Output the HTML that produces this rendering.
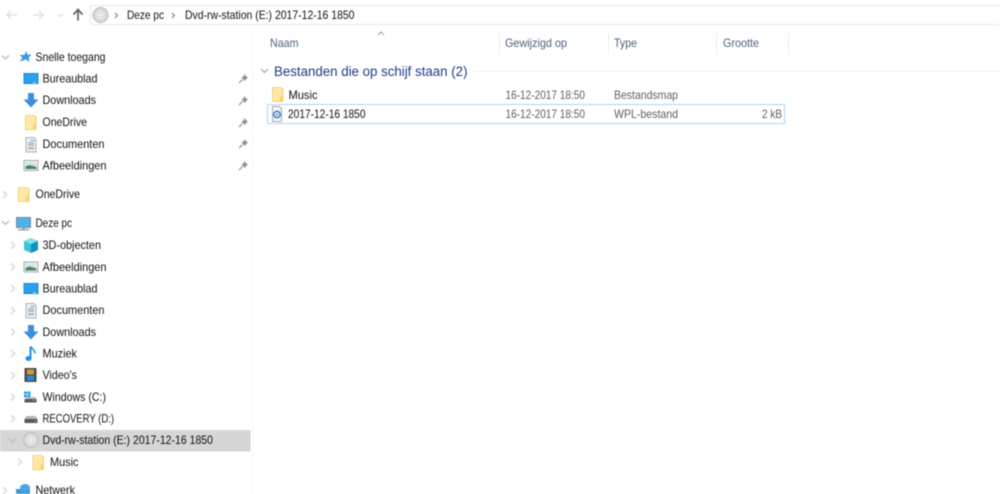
<!DOCTYPE html>
<html><head><meta charset="utf-8"><style>
html,body{margin:0;padding:0;background:#fff;width:1000px;height:494px;overflow:hidden}
svg{display:block;filter:blur(.4px)}
text{font-family:"Liberation Sans",sans-serif;font-size:12px;fill:#101010}
.g{fill:#5f5f5f}.h{fill:#4c607a}
</style></head><body>
<svg width="1000" height="494" viewBox="0 0 1000 494" xmlns="http://www.w3.org/2000/svg">
<defs>
<g id="folder"><path d="M0 0h9.500l.5 1h1.500v14H0z" fill="#f4d478"/><rect x="1" y="1" width="9" height="13" fill="#ffe9a6"/><rect x="8" y="9.500" width="3.500" height="5.500" fill="#f7d26a"/></g>
<g id="desk"><rect x="0" y="0" width="15" height="11" fill="#1b86d8"/><rect x="1" y="1" width="13" height="8.500" fill="#2aa0ee"/><rect x="9" y="9.500" width="4" height=".8" fill="#bfe0f5"/></g>
<path id="down" d="M4.500 0h6v6.500h4.500L7.500 14.500 0 6.500h4.500z" fill="#3a8fde"/>
<g id="doc"><path d="M.5.500h8l2 2v12.500H.5z" fill="#f0f0f0" stroke="#b0b0b0"/><path d="M5 3.500h4M2.500 6h6M2.500 8h6" stroke="#6c9ac4"/><path d="M2.500 10h6v2.500h-6z" fill="#aeb9c4"/></g>
<g id="pic"><rect x=".5" y=".5" width="14" height="10" fill="#f2f2f2" stroke="#a8a8a8"/><rect x="2" y="2" width="11" height="7" fill="#cfe5f5"/><path d="M2 6.500l4-1.500 7 2v2H2z" fill="#4c8060"/></g>
<g id="pin" transform="translate(-1 -1)"><path d="M6.500 1l4 4-1.500.5-1.500 2.500-3.500-3.500 2.500-1.500z" fill="#8f8f8f"/><path d="M5 6.500L1.500 10" stroke="#8f8f8f" stroke-width="1.200"/></g>
<g id="disc"><circle cx="8" cy="8" r="7.500" fill="#d8d8d8" stroke="#bcbcbc"/><circle cx="8" cy="8" r="4.500" fill="#e8e8e8"/><circle cx="8" cy="8" r="1.800" fill="#fff" stroke="#c0c0c0" stroke-width=".6"/></g>
<g id="drive"><path d="M2 0h9l2 3v4H0V3z" fill="#b5b5b5"/><rect x="0" y="3" width="13" height="4" fill="#5a5a5a"/><rect x="10" y="4.500" width="1.500" height="1" fill="#6fd06f"/></g>
<path id="cr" d="M0 0l3.500 3.500L0 7" fill="none" stroke="#d4d4d4" stroke-width="1.300"/>
<path id="cd" d="M0 0l3.500 3.500L7 0" fill="none" stroke="#bcbcbc" stroke-width="1.300"/>
</defs>

<!-- toolbar -->
<g fill="none" stroke-width="1.300">
<path d="M7 15h10M11 11l-4 4 4 4" stroke="#dedede"/>
<path d="M33 15h10M39 11l4 4-4 4" stroke="#dedede"/>
<path d="M58 14l2.500 2.500L63 14" stroke="#dedede"/>
<path d="M78 20.500V10M73.500 14.500l4.500-5 4.500 5" stroke="#666" stroke-width="1.800"/>
</g>
<path d="M90.500 25V5.500H1000" fill="none" stroke="#eaeaea"/>
<path d="M90.500 24.500H1000" fill="none" stroke="#eaeaea"/>
<use href="#disc" x="92.500" y="7"/>
<path d="M115 13l2.500 2.500L115 18" fill="none" stroke="#777"/>
<path d="M172 13l2.500 2.500L172 18" fill="none" stroke="#777"/>
<text x="127" y="19" textLength="37" lengthAdjust="spacingAndGlyphs">Deze pc</text>
<text x="185" y="19" textLength="169.500" lengthAdjust="spacingAndGlyphs">Dvd-rw-station (E:) 2017-12-16 1850</text>

<!-- sidebar separators -->
<rect x="252" y="30" width="1" height="464" fill="#f6f6f6"/>
<rect x="0" y="430" width="250.500" height="21.500" fill="#d6d6d6"/>

<!-- quick access -->
<use href="#cd" x="2" y="55.500"/>
<path d="M26 51l1.700 3.800 4-.3-3 3 1 4.500-3.800-2.500-6 2 2.500-4-2.800-2.500 5-.3z" fill="#3b9ae0"/>
<text x="35.500" y="61" textLength="70" lengthAdjust="spacingAndGlyphs">Snelle toegang</text>
<use href="#desk" x="23.500" y="73"/><text x="42.500" y="82.500" textLength="55" lengthAdjust="spacingAndGlyphs">Bureaublad</text>
<use href="#down" x="23.500" y="93"/><text x="42.500" y="104" textLength="53.500" lengthAdjust="spacingAndGlyphs">Downloads</text>
<use href="#folder" x="25" y="115"/><text x="42.500" y="126" textLength="44.500" lengthAdjust="spacingAndGlyphs">OneDrive</text>
<use href="#doc" x="25.500" y="137"/><text x="42.500" y="148" textLength="62" lengthAdjust="spacingAndGlyphs">Documenten</text>
<use href="#pic" x="23.500" y="160"/><text x="42.500" y="169.500" textLength="64" lengthAdjust="spacingAndGlyphs">Afbeeldingen</text>
<use href="#pin" x="238.500" y="74"/><use href="#pin" x="238.500" y="96"/><use href="#pin" x="238.500" y="118"/><use href="#pin" x="238.500" y="139"/><use href="#pin" x="238.500" y="161"/>

<!-- onedrive -->
<use href="#cr" x="3" y="191"/>
<use href="#folder" x="18" y="187"/>
<text x="35.500" y="198" textLength="44.500" lengthAdjust="spacingAndGlyphs">OneDrive</text>

<!-- deze pc -->
<use href="#cd" x="2" y="221"/>
<rect x="16.500" y="217.500" width="14" height="10" fill="#4eb1ec" stroke="#7a8a99"/><rect x="18" y="229" width="11" height="1.500" fill="#9aa5ad"/><rect x="22" y="227.500" width="3" height="2" fill="#9aa5ad"/>
<text x="35.500" y="227" textLength="36.500" lengthAdjust="spacingAndGlyphs">Deze pc</text>

<use href="#cr" x="11" y="242"/>
<path d="M31 238l7 3v9l-7 3-7-3v-9z" fill="#3cc3d9"/><path d="M31 244l7-3v9l-7 3z" fill="#0f90c0"/><path d="M24 241l7-3 7 3-7 3z" fill="#7fe0ea"/>
<text x="42.500" y="249" textLength="58.500" lengthAdjust="spacingAndGlyphs">3D-objecten</text>
<use href="#cr" x="11" y="263.500"/><use href="#pic" x="23.500" y="261.500"/><text x="42.500" y="271" textLength="64" lengthAdjust="spacingAndGlyphs">Afbeeldingen</text>
<use href="#cr" x="11" y="285"/><use href="#desk" x="23.500" y="283"/><text x="42.500" y="292.500" textLength="55" lengthAdjust="spacingAndGlyphs">Bureaublad</text>
<use href="#cr" x="11" y="307"/><use href="#doc" x="25.500" y="303"/><text x="42.500" y="314" textLength="62" lengthAdjust="spacingAndGlyphs">Documenten</text>
<use href="#cr" x="11" y="328.500"/><use href="#down" x="23.500" y="325"/><text x="42.500" y="336" textLength="53.500" lengthAdjust="spacingAndGlyphs">Downloads</text>
<use href="#cr" x="11" y="350"/>
<path d="M30.500 346.500v12" stroke="#1e90e8" stroke-width="2"/><ellipse cx="28.500" cy="358.500" rx="3" ry="2.500" fill="#1e90e8"/><path d="M31 346.500c1 3 4 3 4 7" stroke="#1e90e8" stroke-width="1.500" fill="none"/>
<text x="42.500" y="357.500" textLength="34.500" lengthAdjust="spacingAndGlyphs">Muziek</text>
<use href="#cr" x="11" y="372"/>
<rect x="24.500" y="368" width="12" height="14" fill="#4a4a4a"/><rect x="27" y="369.500" width="7" height="5" fill="#c9a03a"/><rect x="27" y="375.500" width="7" height="5" fill="#2b8ad8"/>
<text x="42.500" y="379" textLength="34.500" lengthAdjust="spacingAndGlyphs">Video's</text>
<use href="#cr" x="11" y="393.500"/>
<path d="M24 394h3v-2.500h-3zM27.500 394h3v-2.500h-3zM24 397.500h3v-3h-3zM27.500 397.500h3v-3h-3z" fill="#1fa5ee"/><rect x="24.500" y="399" width="12" height="3.500" fill="#5a5a5a"/><rect x="26" y="397" width="10" height="2" fill="#bdbdbd"/><rect x="33" y="400" width="1.500" height="1" fill="#6fd06f"/>
<text x="42.500" y="401" textLength="63.500" lengthAdjust="spacingAndGlyphs">Windows (C:)</text>
<use href="#cr" x="11" y="415"/><use href="#drive" x="24.500" y="416"/><text x="42.500" y="422.500" textLength="71.500" lengthAdjust="spacingAndGlyphs">RECOVERY (D:)</text>
<use href="#cd" x="9" y="438.500"/><use href="#disc" x="23" y="432"/><text x="42.500" y="444" textLength="170.500" lengthAdjust="spacingAndGlyphs">Dvd-rw-station (E:) 2017-12-16 1850</text>
<use href="#cr" x="18" y="458.500"/><use href="#folder" x="32.500" y="455"/><text x="50" y="466" textLength="28.500" lengthAdjust="spacingAndGlyphs">Music</text>
<use href="#cr" x="3" y="487"/>
<rect x="16" y="489" width="14" height="5" fill="#3c9ad8"/><ellipse cx="25" cy="488" rx="5" ry="4" fill="#4aa5e0"/>
<text x="35.500" y="494" textLength="39.500" lengthAdjust="spacingAndGlyphs">Netwerk</text>

<!-- header -->
<path d="M378 35l3-3 3 3" fill="none" stroke="#a8a8a8" stroke-width="1.200"/>
<text class="h" x="270" y="47" textLength="28.500" lengthAdjust="spacingAndGlyphs">Naam</text>
<text class="h" x="505" y="47" textLength="62" lengthAdjust="spacingAndGlyphs">Gewijzigd op</text>
<text class="h" x="614" y="47" textLength="23" lengthAdjust="spacingAndGlyphs">Type</text>
<text class="h" x="723" y="47" textLength="36" lengthAdjust="spacingAndGlyphs">Grootte</text>
<g fill="#ececec"><rect x="499" y="32" width="1" height="22"/><rect x="608" y="32" width="1" height="22"/><rect x="716" y="32" width="1" height="22"/><rect x="788" y="32" width="1" height="22"/></g>

<!-- group -->
<path d="M261 69l3.500 3.500L268 69" fill="none" stroke="#a8a8a8" stroke-width="1.200"/>
<text x="274" y="76" textLength="193.500" lengthAdjust="spacingAndGlyphs" style="font-size:13.500px;fill:#1e3a8a">Bestanden die op schijf staan (2)</text>
<rect x="474" y="71" width="526" height="1" fill="#eeeeee"/>

<!-- rows -->
<use href="#folder" x="272" y="87"/>
<text x="288.500" y="99" textLength="29" lengthAdjust="spacingAndGlyphs">Music</text>
<text class="g" x="505.500" y="99" textLength="79.500" lengthAdjust="spacingAndGlyphs">16-12-2017 18:50</text>
<text class="g" x="614" y="99" textLength="64" lengthAdjust="spacingAndGlyphs">Bestandsmap</text>

<rect x="267.500" y="104.500" width="517" height="19" fill="#fff" stroke="#a8d6fb"/>
<path d="M272.500 106.500h7l2 2v13h-9z" fill="#f5f5f5" stroke="#a9a9a9"/>
<circle cx="277" cy="114.500" r="3.200" fill="none" stroke="#2878c8" stroke-width="1.400"/><circle cx="277" cy="114.500" r="1" fill="#2878c8"/>
<text x="288" y="118" textLength="77.500" lengthAdjust="spacingAndGlyphs">2017-12-16 1850</text>
<text class="g" x="505.500" y="118" textLength="79.500" lengthAdjust="spacingAndGlyphs">16-12-2017 18:50</text>
<text class="g" x="614" y="118" textLength="64" lengthAdjust="spacingAndGlyphs">WPL-bestand</text>
<text class="g" x="762" y="118" textLength="20" lengthAdjust="spacingAndGlyphs">2 kB</text>
</svg>
</body></html>
